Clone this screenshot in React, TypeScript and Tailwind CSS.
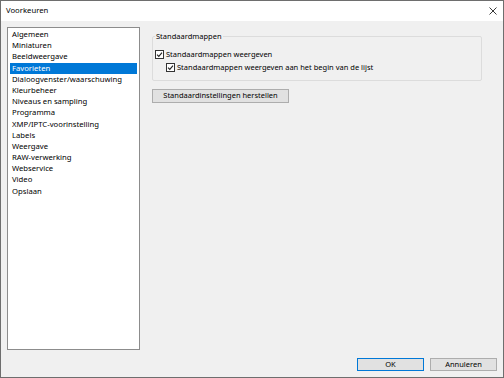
import React from "react";

const items = [
  "Algemeen",
  "Miniaturen",
  "Beeldweergave",
  "Favorieten",
  "Dialoogvenster/waarschuwing",
  "Kleurbeheer",
  "Niveaus en sampling",
  "Programma",
  "XMP/IPTC-voorinstelling",
  "Labels",
  "Weergave",
  "RAW-verwerking",
  "Webservice",
  "Video",
  "Opslaan",
];

const font = { fontFamily: '"Noto Sans", "Liberation Sans", sans-serif' };

// small Windows-style checkbox
const Check = () => (
  <svg width="9" height="9" viewBox="0 0 9 9" className="shrink-0">
    <rect x="0.5" y="0.5" width="8" height="8" fill="#fff" stroke="#333" />
    <path d="M2 4.6 L3.8 6.4 L7 2.6" fill="none" stroke="#222" strokeWidth="1.1" />
  </svg>
);

export default function App() {
  return (
    <div
      className="w-[504px] h-[378px] flex flex-col border border-[#6e6e6e] text-[7.5px] text-black bg-[#f0f0f0]"
      style={font}
    >
      {/* title bar */}
      <div className="h-[20px] bg-white flex items-center justify-between pl-[5px] pr-[6px]">
        <span className="text-[7.7px]">Voorkeuren</span>
        <svg width="8" height="8" viewBox="0 0 8 8">
          <path d="M0.5 0.5 L7.5 7.5 M7.5 0.5 L0.5 7.5" stroke="#222" strokeWidth="0.9" />
        </svg>
      </div>

      <div className="flex-1 flex flex-col pt-[6px] px-[6px] pb-[6px]">
        <div className="flex gap-[12px]">
          {/* category list */}
          <div className="w-[133px] h-[323px] bg-white border border-[#8c8c8c] pt-[1px] px-[2px] text-[7.7px]">
            {items.map((it) => (
              <div
                key={it}
                className={`h-[11.2px] leading-[11.2px] pl-[2px] ${
                  it === "Favorieten" ? "bg-[#0078d7] text-white" : ""
                }`}
              >
                {it}
              </div>
            ))}
          </div>

          {/* settings panel */}
          <div className="flex flex-col pt-[4px]">
            <fieldset className="w-[330px] h-[50px] border border-[#dcdcdc] rounded-[2px] px-[2px] m-0">
              <legend className="px-[1px] leading-[10px]">Standaardmappen</legend>
              <div className="flex items-center gap-[2px] mt-[8px] h-[11px]">
                <Check />
                <span>Standaardmappen weergeven</span>
              </div>
              <div className="flex items-center gap-[2px] mt-[2px] ml-[11px] h-[11px]">
                <Check />
                <span>Standaardmappen weergeven aan het begin van de lijst</span>
              </div>
            </fieldset>
            <button className="mt-[8px] w-[137px] h-[14px] bg-[#e1e1e1] border border-[#adadad] flex items-center justify-center leading-none">
              Standaardinstellingen herstellen
            </button>
          </div>
        </div>

        {/* dialog buttons */}
        <div className="mt-auto flex justify-end gap-[6px]">
          <button className="w-[67px] h-[13px] bg-[#e1e1e1] border border-[#0078d7] flex items-center justify-center leading-none">
            OK
          </button>
          <button className="w-[67px] h-[13px] bg-[#e1e1e1] border border-[#adadad] flex items-center justify-center leading-none">
            Annuleren
          </button>
        </div>
      </div>
    </div>
  );
}
